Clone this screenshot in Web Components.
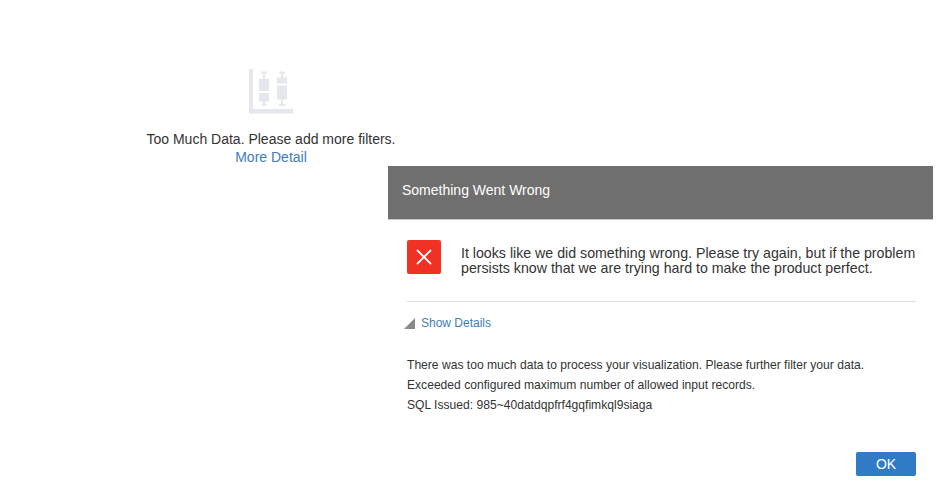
<!DOCTYPE html>
<html>
<head>
<meta charset="utf-8">
<title>Something Went Wrong</title>
<style>
  html, body { margin: 0; height: 100%; background: #fff; overflow: hidden; }
  body { position: relative; font-family: "Liberation Sans", Arial, sans-serif; }
</style>
</head>
<body>
<empty-state>
  Too Much Data. Please add more filters.
  <a slot="link">More Detail</a>
</empty-state>

<error-dialog heading="Something Went Wrong">
  <span slot="message">It looks like we did something wrong. Please try again, but if the problem persists know that we are trying hard to make the product perfect.</span>
  <div>There was too much data to process your visualization. Please further filter your data.</div>
  <div>Exceeded configured maximum number of allowed input records.</div>
  <div>SQL Issued: 985~40datdqpfrf4gqfimkql9siaga</div>
</error-dialog>

<script>
// panel de fondo con el grafico vacio
class EmptyState extends HTMLElement {
  constructor() {
    super();
    this.attachShadow({mode: 'open'});
  }
  connectedCallback() {
    this.shadowRoot.innerHTML = `
    <style>
      :host {
        display: flex;
        flex-direction: column;
        align-items: center;
        width: 542px;
        padding-top: 69px;
        color: #333;
        font-size: 14px;
        line-height: 18px;
      }
      svg { display: block; margin-bottom: 16px; }
      .text { text-align: center; }
      ::slotted(a) { color: #3f7db8; display: block; }
    </style>
    <svg width="45" height="45" viewBox="0 0 45 45" fill="#e4e8ed">
      <path d="M0 0h4v40h40v4.500H0z"/>
      <path d="M12 2.500h6v2h-2v5.500h4v12H10V10h4V4.500h-2z"/>
      <path d="M10 24h10v8.500h-4v2h2v2h-6v-2h2v-2h-4z"/>
      <path d="M30 2.500h6v2h-2v4h4v6H28v-6h4v-4h-2z"/>
      <path d="M28 16.500h10v14h-4v4.500h2v2h-6v-2h2v-4.500h-4z"/>
    </svg>
    <div class="text"><slot></slot></div>
    <div class="text"><slot name="link"></slot></div>
    `;
  }
}

// dialogo de error, va encima de la pagina
class ErrorDialog extends HTMLElement {
  constructor() {
    super();
    this.attachShadow({mode: 'open'});
  }
  connectedCallback() {
    const heading = this.getAttribute('heading');
    this.shadowRoot.innerHTML = `
    <style>
      :host {
        display: block;
        position: absolute;
        left: 388px;
        top: 166px;
        width: 545px;
        color: #333;
      }
      .head {
        height: 48px;
        display: flex;
        align-items: center;
        padding: 0 0 5px 14px;
        background: #6f6f6f;
        border-bottom: 1px solid #c9c9c9;
        color: #fff;
        font-size: 14px;
      }
      .body { padding: 20px 17px 0 19px; }
      .top {
        display: flex;
        gap: 20px;
        padding-bottom: 25px;
        border-bottom: 1px solid #dcdcdc;
      }
      .mark {
        flex: none;
        width: 34px;
        height: 34px;
        border-radius: 2px;
        background: #f03224;
        display: flex;
        align-items: center;
        justify-content: center;
      }
      .msg { font-size: 14.2px; line-height: 15px; padding-top: 6px; margin-right: -4px; }
      .toggle {
        display: flex;
        align-items: center;
        gap: 6px;
        margin: 13px 0 0 -3px;
        color: #3f7db8;
        font-size: 12px;
        line-height: 16px;
      }
      .details {
        margin-top: 24px;
        font-size: 12.1px;
        line-height: 20px;
      }
      .foot { display: flex; justify-content: flex-end; margin-top: 37px; }
      button {
        width: 60px;
        height: 24px;
        padding: 0;
        border: 0;
        border-radius: 2px;
        background: #2f7bc6;
        color: #fff;
        font: 14px "Liberation Sans", Arial, sans-serif;
      }
    </style>
    <div class="head">${heading}</div>
    <div class="body">
      <div class="top">
        <div class="mark">
          <svg width="18" height="18" viewBox="0 0 18 18" stroke="#fff" stroke-width="1.800" fill="none">
            <path d="M2 2l14 14M16 2L2 16"/>
          </svg>
        </div>
        <div class="msg"><slot name="message"></slot></div>
      </div>
      <div class="toggle">
        <svg width="11" height="11" viewBox="0 0 11 11"><path d="M11 0v11H0z" fill="#8a8a8a"/></svg>
        Show Details
      </div>
      <div class="details"><slot></slot></div>
      <div class="foot"><button>OK</button></div>
    </div>
    `;
  }
}

window.customElements.define('empty-state', EmptyState);
window.customElements.define('error-dialog', ErrorDialog);
</script>
</body>
</html>
